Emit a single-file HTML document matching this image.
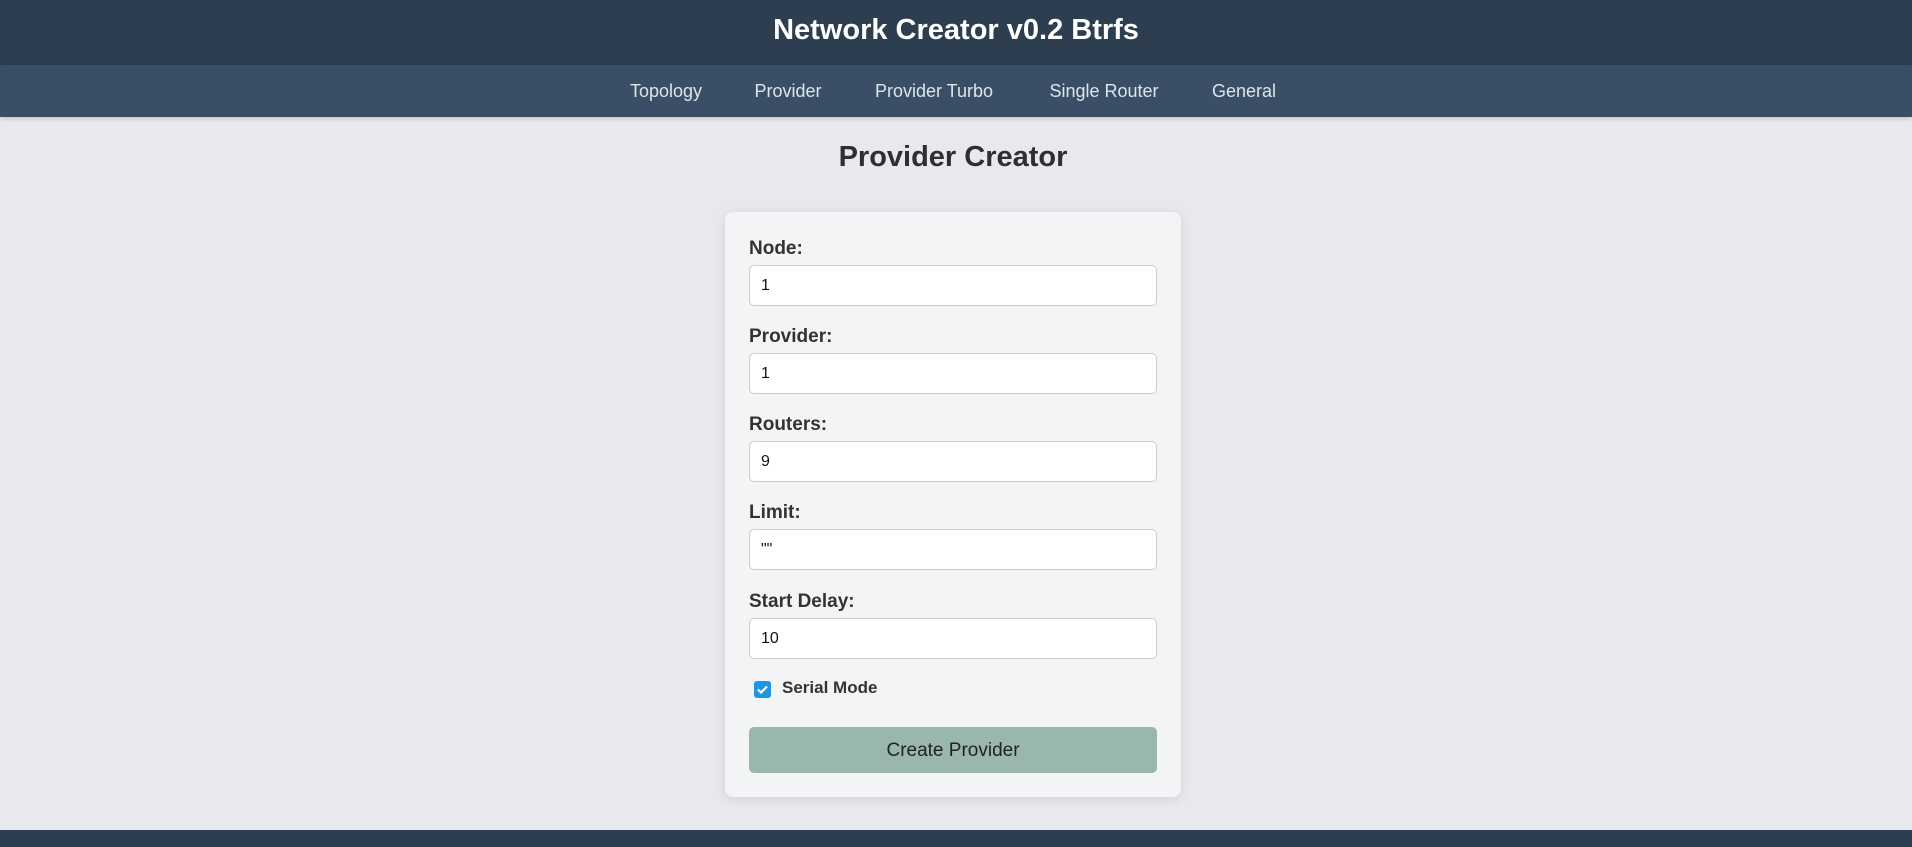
<!DOCTYPE html>
<html><head><style>
*{box-sizing:border-box;margin:0;padding:0}
body{width:1912px;height:847px;background:#e8e9ec;font-family:"Liberation Sans",sans-serif;position:relative;overflow:hidden}
.hd{position:absolute;left:0;top:0;width:1912px;height:65px;background:#2c3e50;color:#fff;font-weight:bold;font-size:29px;text-align:center;line-height:60px}
.nav{position:absolute;left:0;top:65px;width:1912px;height:52px;background:#3a4f66;box-shadow:0 2px 4px rgba(0,0,0,.15)}
.nav span{position:absolute;top:0;line-height:52px;color:#dfe4ea;font-size:18px;transform:translateX(-50%);white-space:nowrap}
h1{position:absolute;top:141px;left:0;width:1906px;text-align:center;font-size:29px;color:#2f2f2f}
.card{position:absolute;left:725px;top:212px;width:456px;height:585px;background:#f3f4f6;border-radius:8px;box-shadow:0 2px 10px rgba(0,0,0,.1)}
.lb{position:absolute;left:24px;font-size:19px;font-weight:bold;color:#333}
.in{position:absolute;left:24px;width:408px;height:41px;background:#fff;border:1px solid #ccc;border-radius:5px;font-size:16px;line-height:39px;padding-left:11px;color:#111}
.cb{position:absolute;left:29px;top:469px;width:17px;height:17px;background:#2196e0;border-radius:3px}
.btn{position:absolute;left:24px;top:515px;width:408px;height:46px;background:#9ab7ac;border-radius:5px;text-align:center;line-height:48px;font-size:19px;color:#222}
.ft{position:absolute;left:0;top:830px;width:1912px;height:17px;background:#2c3e50}
</style></head><body>
<div class="hd">Network Creator v0.2 Btrfs</div>
<div class="nav"><span style="left:666px">Topology</span><span style="left:788px">Provider</span><span style="left:934px">Provider Turbo</span><span style="left:1104px">Single Router</span><span style="left:1244px">General</span></div>
<h1>Provider Creator</h1>
<div class="card">
<div class="lb" style="top:26px">Node:</div><div class="in" style="top:53px">1</div>
<div class="lb" style="top:114px">Provider:</div><div class="in" style="top:141px">1</div>
<div class="lb" style="top:202px">Routers:</div><div class="in" style="top:229px">9</div>
<div class="lb" style="top:290px">Limit:</div><div class="in" style="top:317px">""</div>
<div class="lb" style="top:379px">Start Delay:</div><div class="in" style="top:406px">10</div>
<div class="cb"><svg width="17" height="17" viewBox="0 0 17 17"><path d="M4 8.5l3 3 6-6" stroke="#fff" stroke-width="2.2" fill="none"/></svg></div>
<div class="lb" style="top:466px;left:57px;font-size:17px">Serial Mode</div>
<div class="btn">Create Provider</div>
</div>
<div class="ft"></div>
</body></html>
